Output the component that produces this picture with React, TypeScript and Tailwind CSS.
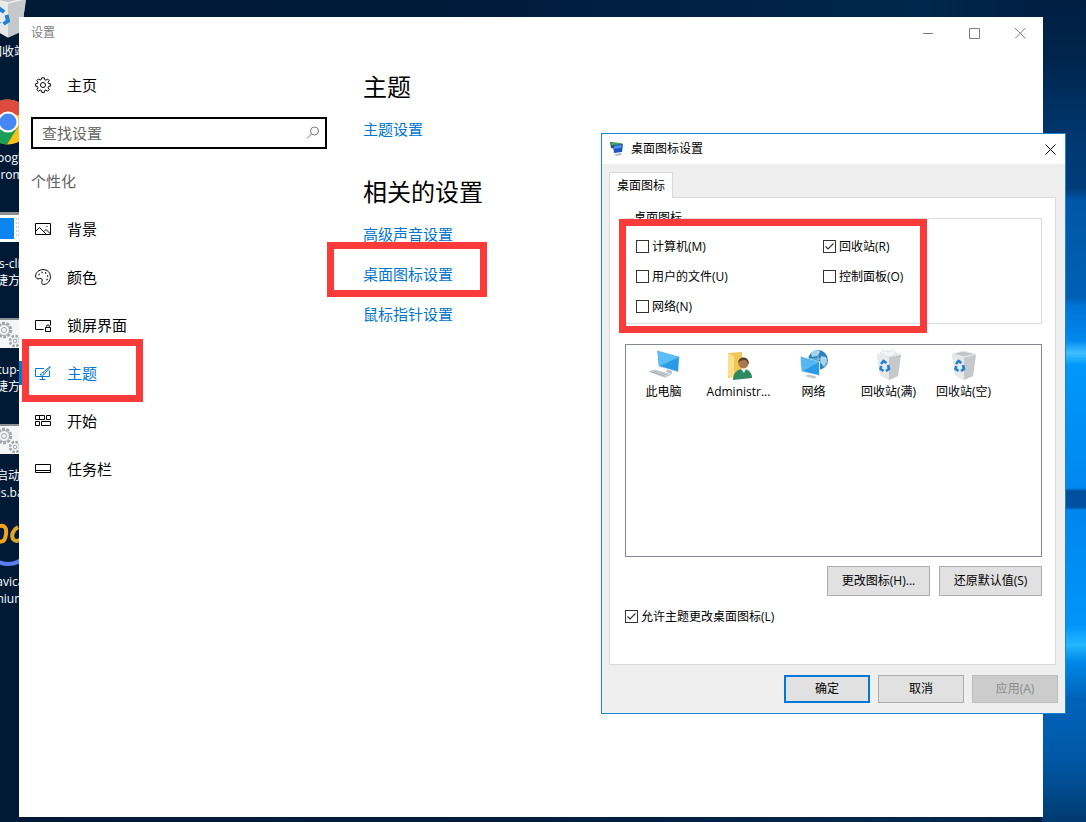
import React, { useState } from 'react';

interface DesktopShortcut {
  lines: string[];
  icon: React.ReactNode;
}

interface NavItem {
  id: string;
  label: string;
  icon: React.ReactNode;
}

interface IconOption {
  id: string;
  label: string;
}

function RecycleBinIcon({ full = false, className }: { full?: boolean; className?: string }) {
  return (
    <svg viewBox="0 0 32 32" className={className} aria-hidden="true">
      <path d="M4 5 15 2l13 3-3 22-9 4-9-5z" fill="#d9dbde" />
      <path d="M4 5l12 3v23l-9-5z" fill="#e6e8ea" />
      <path d="M16 8l12-3-3 22-9 4z" fill="#c6c9cc" />
      <path d="M4 5 15 2l13 3-12 3z" fill={full ? '#f7f8f9' : '#c2c5c9'} stroke="#eceeef" strokeWidth="1" />
      {full && <path d="M7 4l4-3 4 2 5-2 4 4-8 3z" fill="#f4f5f6" stroke="#cfd2d5" strokeWidth=".6" />}
      <g fill="none" stroke="#1f7fd0" strokeWidth="2.6">
        <path d="M8 15l2.500-3 3 2" />
        <path d="M15 16l1 4-3 2" />
        <path d="M10.500 22 7.500 20l.7-3" />
      </g>
    </svg>
  );
}

function ChromeIcon() {
  return (
    <svg viewBox="0 0 48 48" className="h-12 w-12" aria-hidden="true">
      <circle cx="24" cy="25" r="22.500" fill="#fbc116" />
      <path d="M4.500 13.700A22.500 22.500 0 0 1 43.500 13.700L46 18H24l-9.500 12.500z" fill="#dd4b3e" />
      <path d="M4.500 13.700A22.500 22.500 0 0 0 23 47.500L33.500 30.500 24 35l-9.500-4z" fill="#1b9e57" />
      <circle cx="24" cy="25" r="10.500" fill="#fff" />
      <circle cx="24" cy="25" r="8.500" fill="#4587f3" />
    </svg>
  );
}

function AppWindowIcon() {
  return (
    <svg viewBox="0 0 48 48" className="h-12 w-12" aria-hidden="true">
      <path d="M0 9h48v30H0z" fill="#fff" />
      <path d="M0 9h48v3H0z" fill="#8c8f94" />
      <path d="M4 15h26v21H4z" fill="#0a84ef" />
      <path d="M32 16h12M32 20h12M32 24h12M32 28h12M32 32h12" stroke="#9a9da1" strokeDasharray="1 1" />
    </svg>
  );
}

function BatchFileIcon() {
  return (
    <svg viewBox="0 0 48 48" className="h-12 w-12" aria-hidden="true">
      <path d="M0 9h48v30H0z" fill="#f5f6f7" />
      <path d="M0 9h48v2H0z" fill="#8c8f94" />
      <g fill="none" stroke="#9fa3a8">
        <circle cx="20" cy="21" r="7" strokeWidth="2.500" strokeDasharray="3 1.400" />
        <circle cx="20" cy="21" r="5.500" />
        <circle cx="20" cy="21" r="2.500" />
        <circle cx="31" cy="32" r="5" strokeWidth="2.500" strokeDasharray="2.500 1.400" />
        <circle cx="31" cy="32" r="1.800" />
      </g>
    </svg>
  );
}

function NavicatIcon() {
  return (
    <svg viewBox="0 0 48 48" className="h-12 w-12" aria-hidden="true">
      <path d="M13 6c7-3 10 0 9 7s-2 8-10 8" fill="none" stroke="#f5a11d" strokeWidth="4" />
      <path d="M34 6c-5 3-7 8-5 12 2 3 6 2 9 0" fill="none" stroke="#dfa823" strokeWidth="4" />
      <path d="M6 34c9 12 27 12 36 0" fill="none" stroke="#5a7ff0" strokeWidth="4" />
    </svg>
  );
}

function ComputerIcon() {
  return (
    <svg viewBox="0 0 32 32" className="h-8 w-8" aria-hidden="true">
      <path d="M9 1l23 6.500-1.500 16L10.500 18z" fill="#dfe6ec" />
      <path d="M9.500 2 31 8l-1 14.500L11 17z" fill="#2a9be6" />
      <path d="M9.500 2 31 8 11.500 17.200 11 17z" fill="#5cbcf5" />
      <path d="M19 20.500l5 1.500v3l-6-2z" fill="#b9c2ca" />
      <path d="M1 22.500l6-1.500 16 4.500-6 3z" fill="#d5dade" stroke="#a9b1b8" strokeWidth=".5" />
      <path d="M3 22.800l14 4.200M5.500 22l14 4" stroke="#96a0a8" strokeWidth=".7" />
    </svg>
  );
}

function UserFolderIcon() {
  return (
    <svg viewBox="0 0 32 32" className="h-8 w-8" aria-hidden="true">
      <path d="M5 4l14-1v22L5 29z" fill="#f1c654" />
      <path d="M5 4l6 3v23l-6-3z" fill="#fbe08c" />
      <circle cx="20.500" cy="14.500" r="5" fill="#a87850" />
      <path d="M15 14c0-7 11-8 11 1-2-1-2-4-4-4s-5 0-7 3z" fill="#53422f" />
      <path d="M10 31c0-7 4-11 10-11s9 4 9 9z" fill="#2f8a62" />
      <path d="M18 20l3 4 2-4z" fill="#e8f1ec" />
    </svg>
  );
}

function NetworkIcon() {
  return (
    <svg viewBox="0 0 32 32" className="h-8 w-8" aria-hidden="true">
      <circle cx="20" cy="11" r="10" fill="#2b83bd" />
      <path d="M13 4c4-4 8-3 9-1l-3 4-5 1zM23 7l5 1 1 5-3 5-4-5z" fill="#a5d3e8" />
      <path d="M20 1v20M10 10h20" stroke="#cde7f3" strokeWidth=".6" />
      <path d="M2 7l20 5.500V27L3 23z" fill="#d5e6f1" />
      <path d="M3 8l18 5v13L4 22z" fill="#2a9be6" />
      <path d="M3 8l18 5L5 22.200 4 22z" fill="#55b8f2" />
      <path d="M10 25.500l7 1.500 2 1.500-4 1-8-2.500z" fill="#c1c8ce" />
    </svg>
  );
}

function DialogIcon() {
  return (
    <svg viewBox="0 0 16 16" className="h-4 w-4" aria-hidden="true">
      <path d="M1 1l10 1v7L2 7z" fill="#33566f" />
      <path d="M1 2h12v2H2z" fill="#3fb04d" />
      <path d="M4 4l10-1-1 8-8 1z" fill="#1c53b8" />
      <path d="M5 5l8-1-1 3-7 1z" fill="#4a8ff0" />
      <path d="M6 13l6-1 1 2-6 1z" fill="#b9bfc5" />
    </svg>
  );
}

function LineIcon({ children }: { children: React.ReactNode }) {
  return (
    <svg viewBox="0 0 16 16" className="h-4 w-4 shrink-0" fill="none" stroke="currentColor" aria-hidden="true">
      {children}
    </svg>
  );
}

const shortcuts: DesktopShortcut[] = [
  { lines: ['回收站'], icon: <RecycleBinIcon className="h-12 w-12" /> },
  { lines: ['Google', 'Chrome'], icon: <ChromeIcon /> },
  { lines: ['redis-client', '快捷方式'], icon: <AppWindowIcon /> },
  { lines: ['startup-win', '快捷方式'], icon: <BatchFileIcon /> },
  { lines: ['启动', 'redis.bat...'], icon: <BatchFileIcon /> },
  { lines: ['Navicat', 'Premium 12'], icon: <NavicatIcon /> },
];

const navItems: NavItem[] = [
  {
    id: 'background',
    label: '背景',
    icon: (
      <LineIcon>
        <path d="M.5 2.500h15v11H.5zM.5 10.500l4-4 7 7M9 10.500l2-2 4.500 4.500" />
        <path d="M11.500 5.500h1" />
      </LineIcon>
    ),
  },
  {
    id: 'colors',
    label: '颜色',
    icon: (
      <LineIcon>
        <path d="M.6 7C.6 3.500 4 .6 8 .6c4.500 0 7.400 3 7.400 7 0 4.400-3 7.800-6.600 7.800-2 0-2.600-1.200-1.800-3 .8-2-.5-3.600-2.400-2.800C2.600 10.500.6 9.500.6 7z" />
        <path d="M3.500 5.500h1.200M6.500 3.500h1.200M10 4h1.200M12 7h1.200M11.500 10.500h1.200" strokeWidth="1.300" />
      </LineIcon>
    ),
  },
  {
    id: 'lockscreen',
    label: '锁屏界面',
    icon: (
      <LineIcon>
        <path d="M8.500 12.500h-8v-9h15v5" />
        <path d="M10.500 10.500h5v4h-5zM11.500 10.500V9.500a1.500 1.500 0 0 1 3 0v1" />
      </LineIcon>
    ),
  },
  {
    id: 'themes',
    label: '主题',
    icon: (
      <LineIcon>
        <path d="M9 3.500H.5v8h14v-6M7.500 11.500v3M4.500 14.500h6" />
        <path d="M15 1.500 8 7.500l1.500 1.300L15.500 2zM8 7.500c-1.500 0-1.500 1.500-3 2.300 2 .6 4 .4 4.500-1" />
      </LineIcon>
    ),
  },
  {
    id: 'start',
    label: '开始',
    icon: (
      <LineIcon>
        <path d="M.5 2.500h9v4h-9zM4.500 2.500v4M11.500 2.500h4v4h-4zM.5 8.500h4v4h-4zM6.500 8.500h9v4h-9z" />
      </LineIcon>
    ),
  },
  {
    id: 'taskbar',
    label: '任务栏',
    icon: (
      <LineIcon>
        <path d="M.5 3.500h15v8H.5zM.5 9.500h15" />
      </LineIcon>
    ),
  },
];

const desktopIconOptions: IconOption[] = [
  { id: 'computer', label: '计算机(M)' },
  { id: 'recycle', label: '回收站(R)' },
  { id: 'files', label: '用户的文件(U)' },
  { id: 'control', label: '控制面板(O)' },
  { id: 'network', label: '网络(N)' },
];

const previewIcons = [
  { label: '此电脑', icon: <ComputerIcon /> },
  { label: 'Administr...', icon: <UserFolderIcon /> },
  { label: '网络', icon: <NetworkIcon /> },
  { label: '回收站(满)', icon: <RecycleBinIcon full className="h-8 w-8" /> },
  { label: '回收站(空)', icon: <RecycleBinIcon className="h-8 w-8" /> },
];

const relatedLinks = ['高级声音设置', '桌面图标设置', '鼠标指针设置'];

function CheckOption({ id, label, checked, onChange }: {
  id: string;
  label: string;
  checked: boolean;
  onChange: () => void;
}) {
  return (
    <label htmlFor={id} className="flex items-center gap-[3px] whitespace-nowrap">
      <span className="grid">
        <input
          id={id}
          type="checkbox"
          checked={checked}
          onChange={onChange}
          className="peer col-start-1 row-start-1 h-[13px] w-[13px] appearance-none border border-[#333] bg-white"
        />
        <svg
          viewBox="0 0 13 13"
          className="pointer-events-none invisible col-start-1 row-start-1 h-[13px] w-[13px] peer-checked:visible"
          fill="none"
          stroke="#333"
          aria-hidden="true"
        >
          <path d="M2.500 6.500 5 9l5.500-5.500" strokeWidth="1.200" />
        </svg>
      </span>
      <span className="pt-px">{label}</span>
    </label>
  );
}

function Desktop() {
  return (
    <div className="absolute -top-[9px] -left-[30px] w-[76px] text-center text-xs leading-[17px] text-white">
      {shortcuts.map((item) => (
        <div key={item.lines.join()} className="flex h-[106px] flex-col items-center">
          {item.icon}
          <div className="mt-1 whitespace-nowrap">
            {item.lines.map((line) => (
              <div key={line}>{line}</div>
            ))}
          </div>
        </div>
      ))}
    </div>
  );
}

function SettingsWindow() {
  const [active, setActive] = useState('themes');

  return (
    <div className="absolute top-[17px] right-[43px] bottom-[5px] left-[19px] bg-white text-[15px] text-black">
      <header className="flex h-8 items-center justify-between pl-3 text-xs text-[#808080]">
        <span>设置</span>
        <div className="flex">
          <button aria-label="最小化" className="flex h-8 w-[46px] items-center justify-center">
            <svg viewBox="0 0 11 11" className="h-[11px] w-[11px]" stroke="currentColor"><path d="M0 5.500h10" /></svg>
          </button>
          <button aria-label="最大化" className="flex h-8 w-[46px] items-center justify-center">
            <svg viewBox="0 0 11 11" className="h-[11px] w-[11px]" fill="none" stroke="currentColor"><path d="M.5.500h10v10H.5z" /></svg>
          </button>
          <button aria-label="关闭" className="flex h-8 w-[46px] items-center justify-center">
            <svg viewBox="0 0 11 11" className="h-[11px] w-[11px]" stroke="currentColor"><path d="M0 0l10.500 10.500M10.500 0 0 10.500" /></svg>
          </button>
        </div>
      </header>

      <div className="flex">
        <aside className="w-[308px] pt-3">
          <button className="flex h-12 w-full items-center gap-4 pl-4">
            <LineIcon>
              <circle cx="8" cy="8" r="2.500" />
              <path d="M6.700.8h2.600l.4 1.900 1.300.5L12.600 2l1.600 1.600-1.200 1.700.5 1.200 1.900.3v2.400l-1.900.4-.5 1.300 1.200 1.600-1.700 1.700-1.600-1.200-1.200.5-.4 1.900H6.800l-.4-1.900-1.300-.5-1.600 1.200-1.700-1.700L3 10.900l-.5-1.300-1.900-.4V6.800l1.900-.4L3 5.200 1.800 3.600l1.700-1.700L5.100 3l1.200-.4z" />
            </LineIcon>
            主页
          </button>

          <div className="mt-2 ml-3 flex h-8 items-center border-2 border-black px-[5px]">
            <input
              type="text"
              aria-label="查找设置"
              placeholder="查找设置"
              className="min-w-0 flex-1 pl-1 text-[15px] outline-none placeholder:text-[#666]"
            />
            <svg viewBox="0 0 14 14" className="h-3.5 w-3.5" fill="none" stroke="#777" aria-hidden="true">
              <circle cx="8.500" cy="5" r="4" />
              <path d="M5.500 8 1 12.500" />
            </svg>
          </div>

          <h2 className="mt-2 flex h-12 items-center pl-3 text-[#606060]">个性化</h2>

          <nav>
            {navItems.map((item) => (
              <div key={item.id} className="relative">
                <button
                  onClick={() => setActive(item.id)}
                  className={`flex h-12 w-full items-center gap-4 pl-4 ${active === item.id ? 'text-[#0078d7]' : ''}`}
                >
                  {item.icon}
                  {item.label}
                </button>
                {active === item.id && <span className="absolute top-3 left-0 h-6 w-1 bg-[#0078d7]" />}
                {item.id === 'themes' && (
                  <span className="pointer-events-none absolute -top-2.5 left-[3px] h-[63px] w-[121px] border-[7px] border-[#fb3a3a]" />
                )}
              </div>
            ))}
          </nav>
        </aside>

        <main className="min-w-0 flex-1 pt-[22px] pl-9">
          <h1 className="text-2xl">主题</h1>
          <a href="#theme" className="mt-1.5 flex h-10 items-center text-[#0075d0]">主题设置</a>

          <h1 className="mt-[27px] text-2xl">相关的设置</h1>
          <ul className="mt-1.5">
            {relatedLinks.map((link) => (
              <li key={link} className="relative flex h-10 items-center">
                <a href="#related" className="text-[#0075d0]">{link}</a>
                {link === '桌面图标设置' && (
                  <span className="pointer-events-none absolute -top-3 -left-9 h-[55px] w-40 border-[7px] border-[#fb3a3a]" />
                )}
              </li>
            ))}
          </ul>
        </main>
      </div>
    </div>
  );
}

function IconSettingsDialog() {
  const [selected, setSelected] = useState<string[]>(['recycle']);
  const [allowThemes, setAllowThemes] = useState(true);

  const toggle = (id: string) => {
    setSelected((prev) => (prev.includes(id) ? prev.filter((x) => x !== id) : [...prev, id]));
  };

  return (
    <div
      role="dialog"
      aria-label="桌面图标设置"
      className="absolute top-[133px] right-5 w-[465px] border border-[#1883d7] bg-[#efefef] text-xs text-black"
    >
      <header className="flex h-[30px] items-center bg-white pl-[7px]">
        <DialogIcon />
        <span className="ml-1.5">桌面图标设置</span>
        <button aria-label="关闭" className="ml-auto flex h-[30px] w-[30px] items-center justify-center">
          <svg viewBox="0 0 11 11" className="h-[11px] w-[11px]" stroke="#000"><path d="M.5.5l10 10M10.500.5l-10 10" /></svg>
        </button>
      </header>

      <div className="px-[7px] pt-2 pb-2.5">
        <div role="tablist" className="flex">
          <button role="tab" aria-selected="true" className="relative -mb-px h-[26px] w-16 border border-b-0 border-[#dadada] bg-white">
            桌面图标
          </button>
        </div>

        <div className="mr-0.5 border border-[#dadada] bg-white pt-3 pr-[13px] pb-10 pl-[15px]">
          <div className="relative">
            <fieldset className="border border-[#dcdcdc] px-2 pb-0.5">
              <legend className="h-4 leading-4">桌面图标</legend>
              <div className="grid auto-rows-[30px] grid-cols-[187px_1fr] pt-[5px] pl-0.5">
                {desktopIconOptions.map((option) => (
                  <CheckOption
                    key={option.id}
                    id={option.id}
                    label={option.label}
                    checked={selected.includes(option.id)}
                    onChange={() => toggle(option.id)}
                  />
                ))}
              </div>
            </fieldset>
            <span className="pointer-events-none absolute top-[9px] -left-1.5 h-[114px] w-[308px] border-[7px] border-[#fb3a3a]" />
          </div>

          <ul className="mt-5 flex h-[213px] items-start border border-[#828790] pt-1">
            {previewIcons.map((item) => (
              <li key={item.label} className="flex w-[75px] flex-col items-center whitespace-nowrap">
                {item.icon}
                <span className="mt-[3px] leading-4">{item.label}</span>
              </li>
            ))}
          </ul>

          <div className="mt-[9px] flex justify-end gap-[9px]">
            <button className="h-[30px] w-[103px] border border-[#adadad] bg-[#e1e1e1]">更改图标(H)...</button>
            <button className="h-[30px] w-[103px] border border-[#adadad] bg-[#e1e1e1]">还原默认值(S)</button>
          </div>

          <div className="mt-3 h-4 leading-4">
            <CheckOption
              id="allow-themes"
              label="允许主题更改桌面图标(L)"
              checked={allowThemes}
              onChange={() => setAllowThemes(!allowThemes)}
            />
          </div>
        </div>

        <div className="mt-2.5 flex justify-end gap-2">
          <button className="h-7 w-[86px] border-2 border-[#0078d7] bg-[#e1e1e1]">确定</button>
          <button className="h-7 w-[86px] border border-[#adadad] bg-[#e1e1e1]">取消</button>
          <button disabled className="h-7 w-[86px] border border-[#bfbfbf] bg-[#cccccc] text-[#8a8a8a]">应用(A)</button>
        </div>
      </div>
    </div>
  );
}

export default function App() {
  return (
    <div className="relative min-h-screen overflow-hidden bg-[linear-gradient(90deg,#001a36,#001a3a_40%,#00274d_85%,#001f42_96%)] font-['Open_Sans','Noto_Sans_CJK_SC',sans-serif]">
      {/* Wallpaper light beams along the right edge */}
      <div className="absolute inset-y-0 right-0 w-11 bg-[linear-gradient(180deg,#001f42_0px,#00254d_60px,#003a75_150px,#003c78_188px,#0056a6_200px,#0060b4_298px,#0074d6_306px,#0088ee_340px,#3fc0ff_353px,#0098fa_365px,#0088ee_488px,#0050a0_491px,#0050a0_507px,#0086ec_510px,#0096f8_625px,#22b6ff_645px,#0088e8_662px,#0062b8_700px,#0058a6_760px,#003a70_822px)]" />
      <Desktop />
      <SettingsWindow />
      <IconSettingsDialog />
    </div>
  );
}
